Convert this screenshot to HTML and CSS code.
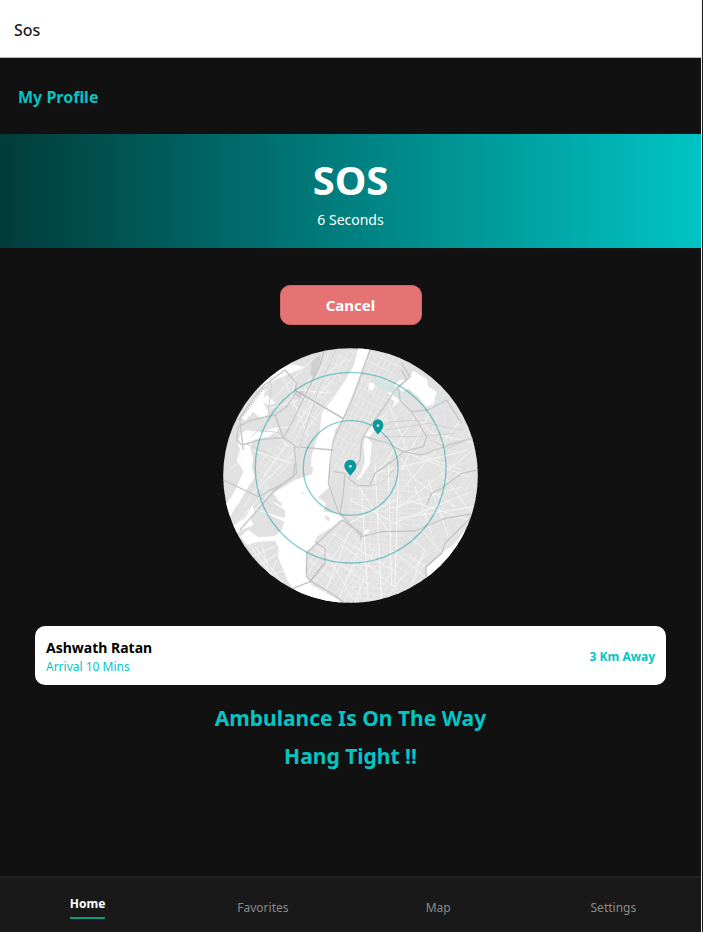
FILE: index.html
```html
<!DOCTYPE html>
<html lang="en">
<head>
<meta charset="utf-8">
<meta name="viewport" content="width=device-width, initial-scale=1">
<title>Sos</title>
<link rel="stylesheet" href="styles.css">
</head>
<body>
<div class="screen">
  <header class="topbar"><h1 class="topbar-title">Sos</h1></header>
  <main class="content">
    <a class="profile-link" href="#">My Profile</a>
    <section class="banner">
      <h2 class="banner-title">SOS</h2>
      <p class="banner-time">6 Seconds</p>
    </section>
    <button class="cancel" type="button">Cancel</button>
    <svg class="map" viewBox="24 24 765 765" role="img" aria-label="Map">
      <defs>
        <clipPath id="disc"><circle cx="406.500" cy="406.500" r="382"/></clipPath>
        <pattern id="grid-a" width="16" height="27" patternUnits="userSpaceOnUse" patternTransform="rotate(28)"><path d="M0 0H16M0 0V27" stroke="#f4f4f4" stroke-width="3" fill="none"/></pattern>
        <pattern id="grid-b" width="34" height="22" patternUnits="userSpaceOnUse" patternTransform="rotate(35)"><path d="M0 0H34M0 0V22M17 0V22" stroke="#f2f2f2" stroke-width="2.500" fill="none"/></pattern>
        <pattern id="grid-c" width="21" height="33" patternUnits="userSpaceOnUse" patternTransform="rotate(4)"><path d="M0 0H21M0 0V33M0 17H21" stroke="#eee" stroke-width="2.500" fill="none"/></pattern>
        <pattern id="grid-d" width="28" height="38" patternUnits="userSpaceOnUse" patternTransform="rotate(-17)"><path d="M0 0H28M0 0V38M0 38L28 19" stroke="#ececec" stroke-width="2.500" fill="none"/></pattern>
      </defs>
      <g clip-path="url(#disc)">
        <path fill="#e1e1e1" d="M24 24H789V789H24Z"/>
        <path fill="url(#grid-a)" d="M460 24H560L530 160L440 300L430 400L345 405L355 300L390 200ZM300 50L430 30L330 190L250 350L215 300L245 220Z"/>
        <path fill="url(#grid-b)" d="M150 330L230 300L240 360L110 480L60 550L110 450ZM275 625L385 540L480 620L620 650L650 789H340L270 700Z"/>
        <path fill="url(#grid-c)" d="M400 440L470 380L560 370L620 450L640 530L600 575L440 580L400 530ZM420 580H570L500 789H380Z"/>
        <path fill="url(#grid-d)" d="M555 170L620 230L720 220L789 300V620L640 700L590 600L640 460L550 370L480 400L460 320L490 260Z"/>
        <g fill="#fff">
          <path d="M430 24H466L420 145L385 235L360 270L352 340L340 410L345 440L310 470L332 490L325 515L370 520L385 540L305 590L300 615L275 630L270 700L290 735L370 780L390 800H270L242 752L220 725L205 690L190 655L190 620L180 602L130 606L95 614L76 590L100 570L130 592L180 588L200 570L206 552L130 510L208 535L212 522L165 490L150 475L185 490L205 500L175 460L215 435L240 420L285 405L290 345L315 270L320 220L350 180L385 130L415 80Z"/>
          <path d="M595 92L635 118L640 140L665 155L655 190L635 200L610 170L580 145L555 160L520 170L540 185L530 205L495 235L455 270L445 315L450 360L440 395L423 420L438 413L465 372L470 310L458 295L500 250L555 180L520 160L525 145L555 120L580 120Z"/>
          <path d="M75 235L125 160L150 145L145 190L160 215L150 238L130 230L115 215L92 240ZM185 90L230 72L270 82L215 105L165 125L150 140L130 150L150 120ZM140 180L155 165L182 190L157 195Z"/>
          <path d="M75 285L95 270L145 278L185 260L188 274L160 290L115 300L105 325L115 355L110 380L120 410L100 440L65 500L45 480L65 440L85 395L65 360L75 330L68 310ZM25 500L50 470L62 500L40 540ZM112 495L120 520L105 530L115 555L75 572L60 585L50 560L90 535Z"/>
          <path d="M635 682L680 640L720 610L789 520V650L650 780L635 700Z"/>
          <path d="M462 130L475 128L480 140L472 152L460 148ZM450 570L464 567L458 580L448 582Z"/>
        </g>
        <g fill="#e1e1e1">
          <path d="M285 380L295 383L290 405L280 400ZM260 454L267 460L262 463ZM332 525L345 535L340 545L330 535ZM145 515L208 545L204 555L142 530ZM148 470L212 512L208 522L150 490ZM186 490L203 487L196 497ZM310 475L332 450L348 440L338 465L322 480Z"/>
          <path d="M545 190L552 196L500 245L495 240Z"/>
        </g>
        <path fill="#dde2e5" d="M655 185L685 160L705 180L670 220Z"/>
        <path fill="#d5e4e4" d="M470 110L530 130L580 170L565 178L530 160L480 136Z"/>
        <path fill="#cfcfcf" d="M290 65L318 42L310 90L296 120L286 98ZM235 158L270 150L255 178Z"/>
        <g fill="none" stroke="#f5f5f5" stroke-width="3">
          <path d="M100 220L180 120L260 80M150 210L250 180M170 180L290 60M200 100L280 290M205 200L250 150L350 160M240 120L225 190L310 240M270 250L330 105L390 60M245 250L350 120M260 290L350 170M150 240L220 320M70 280L230 260M45 390L110 330L230 370M145 410L215 310M115 460L235 340"/>
          <path d="M480 240L600 420L720 500M520 190L580 340L760 410M560 180L650 280L780 310M600 230L470 430M660 180L560 390M740 240L560 450M775 330L540 510M480 400L760 330M490 300L740 390M510 510L740 440M535 550L770 455M550 535L775 500M580 480L760 540M600 440L650 580M640 420L700 590M680 400L770 520"/>
          <path d="M400 550L560 470M425 430L530 590M405 480L560 560M480 370L500 789M440 450L460 789M520 370L530 740M550 390L540 740M580 590L630 630L590 730M620 570L690 650M530 630L670 740M390 620L550 750M310 600L410 770M400 580L330 760M440 610L370 780M480 620L420 789M280 660L360 720M300 620L470 740M350 580L550 700M585 650L635 680M535 740L640 640"/>
          <path d="M100 610L180 720M90 660L190 615M140 610L170 730M110 690L190 640M130 720L210 690M150 745L185 660M120 620L215 745M60 560L160 440M70 570L170 450"/>
        </g>
        <g fill="none" stroke="#c6c6c6" stroke-width="4" stroke-linejoin="round">
          <path d="M70 240L145 137L210 90L245 130L240 150L385 236M245 155L215 200L180 225L110 240L70 260L65 300L80 315L140 298L205 293L238 315L245 400L205 430L130 470L25 420M180 225L205 295L235 240L315 75L330 24M240 320L355 330M75 245L85 330M240 370L235 410L180 450L110 530L75 570"/>
          <path d="M467 24L415 170L355 300L345 370L340 430L370 515L440 590L500 575L600 573L690 535L780 520M355 395L390 400L385 460L375 520M560 70L585 110L540 150L515 190L460 265L440 300L435 360L400 415L430 437L465 437L480 400L530 365L565 335L620 345L700 315L789 290"/>
          <path d="M560 90L575 120L550 140L555 180L590 215L640 210L695 180L740 250M590 215L635 290L625 320L565 335L520 310L450 290M635 495L650 460L680 445L740 400L789 390M435 600L440 580L380 540L275 640L275 710L290 725L350 760L390 789M235 745L285 725L330 670L330 625L300 605M780 520L740 560L690 610L680 640L633 680V730"/>
        </g>
        <g fill="none" stroke="#d1d1d1" stroke-width="3" stroke-linejoin="round">
          <path d="M90 310L170 345M110 290L130 270L205 280M170 130L160 215L180 225M645 300L700 325L789 285M560 340L545 380L500 430L450 440M510 270L640 250L740 270M500 290L600 290L720 280M490 265L530 245L630 240M135 470L170 500M365 24L310 150L250 330"/>
        </g>
        <path d="M240 150L385 236M75 240L150 140M633 680L680 640M285 725L325 670" fill="none" stroke="#a8a8a8" stroke-width="3" stroke-dasharray="4 3"/>
        <g fill="none" stroke="#0b9b9f" stroke-opacity=".5" stroke-width="4"><circle cx="407" cy="383" r="286"/><circle cx="407" cy="384" r="142"/></g>
        <g fill="#08979d">
          <path d="M489 284C483 274 473 267 473 254A16 16 0 0 1 505 254C505 267 495 274 489 284Z"/>
          <path d="M406 407C398 396 388 389 388 377A18 18 0 0 1 424 377C424 389 414 396 406 407Z"/>
        </g>
        <g fill="#d8f3f3"><circle cx="489" cy="257" r="4"/><circle cx="406" cy="379" r="4"/></g>
      </g>
    </svg>
    <section class="driver">
      <div>
        <h3 class="driver-name">Ashwath Ratan</h3>
        <p class="driver-eta">Arrival 10 Mins</p>
      </div>
      <p class="driver-distance">3 Km Away</p>
    </section>
    <p class="status">Ambulance Is On The Way<br>Hang Tight !!</p>
  </main>
  <nav class="tabs">
    <a class="tab tab-active" href="#"><span class="tab-label">Home</span></a>
    <a class="tab" href="#">Favorites</a>
    <a class="tab" href="#">Map</a>
    <a class="tab" href="#">Settings</a>
  </nav>
</div>
</body>
</html>
```
FILE: styles.css
```css
* { box-sizing: border-box; }
body {
  margin: 0;
  background: #222;
  font-family: "Segoe UI", "Noto Sans", "Open Sans", sans-serif;
}
h1, h2, h3, p { margin: 0; }
a { text-decoration: none; }
.screen {
  min-height: 100vh;
  margin-right: 1px;
  border-right: 1px solid #eee;
  display: flex;
  flex-direction: column;
  background: #111;
}
.topbar {
  height: 58px;
  padding: 2px 14px 0;
  display: flex;
  align-items: center;
  background: #fff;
  border-bottom: 1px solid #bbb;
}
.topbar-title { font-size: 16px; font-weight: 500; color: #1c1c1e; }
.content {
  flex: 1;
  display: flex;
  flex-direction: column;
  align-items: center;
}
.profile-link {
  align-self: flex-start;
  padding: 27px 18px 25px;
  font-size: 16px;
  line-height: 24px;
  font-weight: 700;
  color: #04c4c4;
}
.banner {
  align-self: stretch;
  height: 114px;
  padding-top: 21px;
  text-align: center;
  color: #fff;
  background: linear-gradient(90deg, #003c3a, #008080 50%, #00c4c4);
}
.banner-title { font-size: 40px; line-height: 50px; font-weight: 700; }
.banner-time { font-size: 14px; line-height: 30px; }
.cancel {
  width: 142px;
  height: 40px;
  margin: 37px 0 23px;
  padding: 0;
  border: 1px solid #cb6868;
  border-radius: 10px;
  background: #e57373;
  color: #fff;
  font: inherit;
  font-size: 15px;
  font-weight: 700;
}
.map { display: block; width: 255px; height: 255px; }
.driver {
  align-self: stretch;
  height: 59px;
  margin: 23px 35px 14px;
  padding: 2px 11px 0;
  display: flex;
  align-items: center;
  justify-content: space-between;
  border-radius: 10px;
  background: #fff;
  color: #04c4c4;
}
.driver-name { font-size: 14px; line-height: 20px; font-weight: 700; color: #000; }
.driver-eta { font-size: 12px; line-height: 18px; }
.driver-distance { font-size: 12px; line-height: 20px; font-weight: 700; }
.status {
  font-size: 21px;
  line-height: 38px;
  font-weight: 700;
  text-align: center;
  color: #04c4c4;
}
.tabs {
  height: 56px;
  display: flex;
  border-top: 2px solid #232323;
  background: #191919;
}
.tab {
  flex: 1;
  display: flex;
  align-items: center;
  justify-content: center;
  padding-top: 4px;
  font-size: 12px;
  color: #8a8a8a;
}
.tab-active { padding-top: 0; font-weight: 700; color: #fff; }
.tab-label { line-height: 24px; padding-bottom: 1px; border-bottom: 2px solid #0b9b80; }
```
